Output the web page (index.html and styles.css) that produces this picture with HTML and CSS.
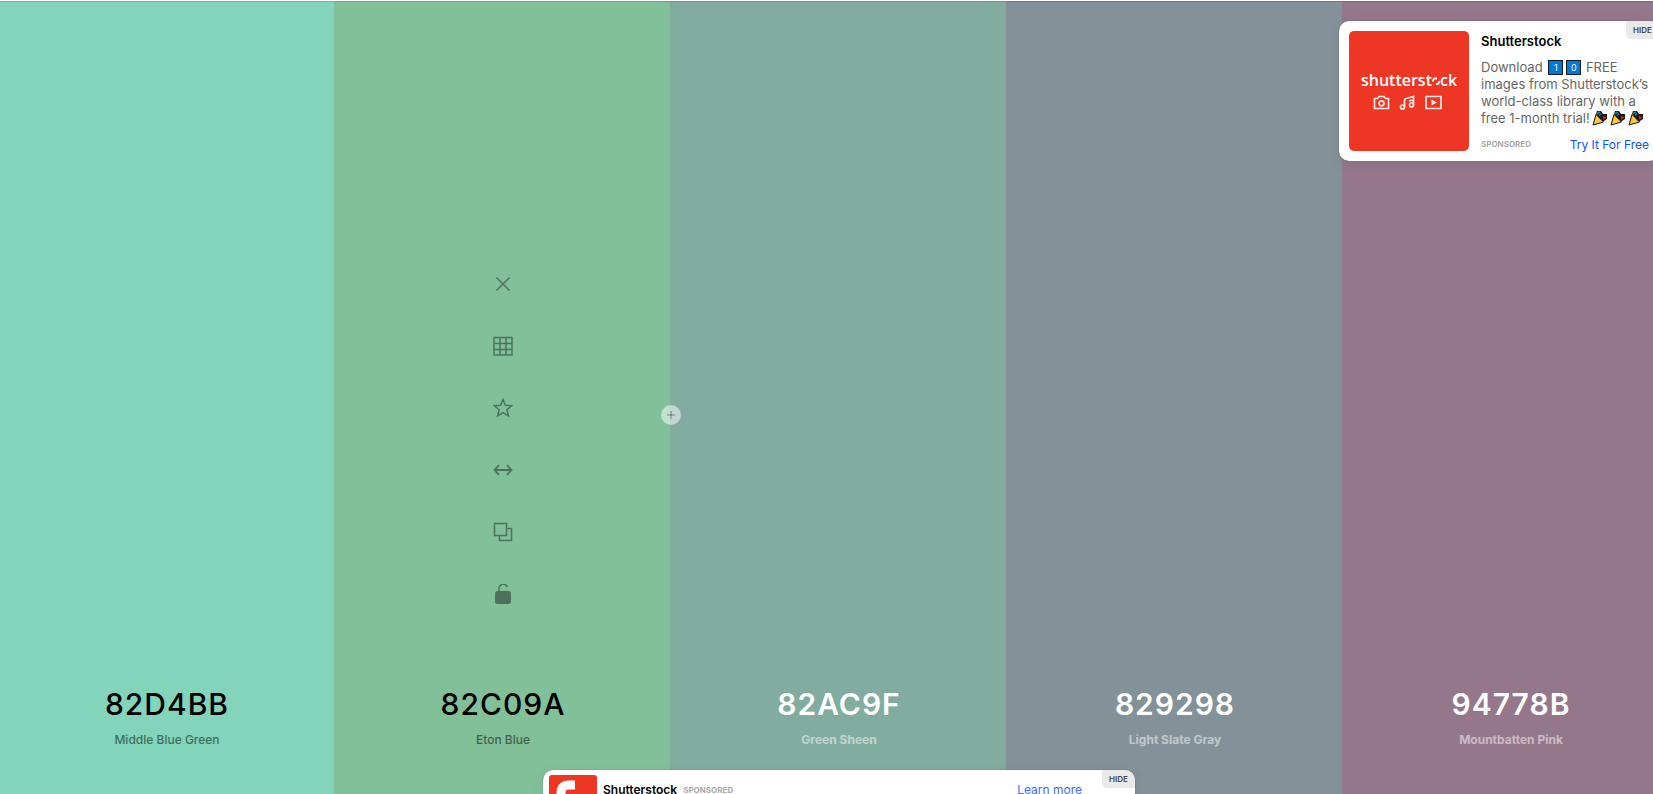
FILE: index.html
```html
<!DOCTYPE html>
<html lang="en">
<head>
<meta charset="utf-8">
<title>Palette generator</title>
<link rel="stylesheet" href="styles.css">
</head>
<body>
<svg class="defs" aria-hidden="true">
  <symbol id="popper" viewBox="0 0 16 16">
    <path d="m4 4 1-3h4l2 3h4v5l-3 2-2 1Z" fill="#161616"/>
    <path d="M1 15 4 4.500 11.500 12Z" fill="#ffc83d" stroke="#111" stroke-width="1" stroke-linejoin="round"/>
    <path d="M5 3.500 8 2M7 5.500l2-2" stroke="#188da5" stroke-width="1.500"/>
    <path d="m10.500 6 4 1-3 3Z" fill="#c92b18"/>
  </symbol>
</svg>
<main class="palette">
  <section class="color color--mint">
    <h2 class="code">82D4BB</h2>
    <p class="name">Middle Blue Green</p>
  </section>
  <section class="color color--eton">
    <div class="tools">
      <button class="tool" aria-label="Remove color"><svg class="icon" viewBox="0 0 20 20"><path d="m3.500 3.500 13 13M16.500 3.500l-13 13"/></svg></button>
      <button class="tool" aria-label="View shades"><svg class="icon" viewBox="0 0 20 20"><path d="M1 1.500h18v17.500h-18ZM7 1.500v17.500M13 1.500v17.500M1 7.500h18M1 13.500h18"/></svg></button>
      <button class="tool" aria-label="Save color"><svg class="icon" viewBox="0 0 20 20"><path d="m10 1.500 2.400 5.700 6.300.5-4.800 4.100 1.500 6.100-5.400-3.300-5.400 3.300 1.500-6.100-4.800-4.100 6.300-.5Z"/></svg></button>
      <button class="tool" aria-label="Drag color"><svg class="icon icon--strong" viewBox="0 0 20 20"><path d="M1.500 10h17M6 5.200 1.500 10 6 14.800M14 5.200l4.500 4.800-4.500 4.800"/></svg></button>
      <button class="tool" aria-label="Copy HEX"><svg class="icon" viewBox="0 0 20 20"><path d="M1.500 1.500h12v12h-12ZM13.500 6.500h5v12h-12v-5"/></svg></button>
      <button class="tool" aria-label="Toggle lock"><svg class="icon" viewBox="0 0 20 20"><path d="M6 7V5a4.300 4.300 0 0 1 8.300-2"/><rect class="solid" x="2" y="7" width="16" height="13" rx="2.500"/></svg></button>
    </div>
    <h2 class="code">82C09A</h2>
    <p class="name">Eton Blue</p>
    <button class="add" aria-label="Add color"><svg class="plus" viewBox="0 0 8 8"><path d="M4 0v8M0 4h8"/></svg></button>
  </section>
  <section class="color color--sheen color--light">
    <h2 class="code">82AC9F</h2>
    <p class="name">Green Sheen</p>
  </section>
  <section class="color color--slate color--light">
    <h2 class="code">829298</h2>
    <p class="name">Light Slate Gray</p>
  </section>
  <section class="color color--pink color--light">
    <h2 class="code">94778B</h2>
    <p class="name">Mountbatten Pink</p>
  </section>

  <aside class="ad ad--card">
    <div class="banner">
      <div class="logo">shutterst<svg class="logo-o" viewBox="0 0 8 10"><path d="M1 5.500V4.500a2 2 0 0 1 2-2h2M7 5v1a2 2 0 0 1-2 2H4"/></svg>ck</div>
      <div class="media">
        <svg class="media-icon" viewBox="0 0 17 15"><path d="M1.500 3.500h3l1.500-2h5l1.500 2h3v10h-14Z"/><circle cx="8.500" cy="8.300" r="2.500"/></svg>
        <svg class="media-icon" viewBox="0 0 17 15"><path d="M5.500 12V5.500q0-1.500 1.500-2l7.500-2V10M10 6l4.500-1"/><circle cx="3.500" cy="12" r="2"/><circle cx="12.500" cy="10" r="2"/></svg>
        <svg class="media-icon" viewBox="0 0 17 15"><path d="M1 1.500h15v12H1Z"/><path class="media-solid" d="m6.500 4.500 5.500 3-5.500 3Z"/></svg>
      </div>
    </div>
    <div class="ad-body">
      <h3 class="ad-title">Shutterstock</h3>
      <p class="ad-text">Download <span class="key">1</span><span class="key">0</span> FREE images from Shutterstock’s world-class library with a free 1-month trial!<svg class="popper"><use href="#popper"/></svg><svg class="popper"><use href="#popper"/></svg><svg class="popper"><use href="#popper"/></svg></p>
      <div class="ad-foot"><span class="sponsored">SPONSORED</span><a class="ad-link" href="#">Try It For Free</a></div>
    </div>
    <button class="hide">HIDE</button>
  </aside>

  <aside class="ad ad--bar">
    <svg class="thumb" viewBox="0 0 48 48"><rect width="48" height="48" rx="3" fill="#ee3624"/><path d="M12 26V18Q12 10 20 10H26" fill="none" stroke="#fff" stroke-width="9"/><path d="M36 24v7q0 8-8 8h-6" fill="none" stroke="#fff" stroke-width="9"/></svg>
    <h3 class="bar-title">Shutterstock</h3>
    <span class="sponsored">SPONSORED</span>
    <a class="bar-link" href="#">Learn more</a>
    <button class="hide">HIDE</button>
  </aside>
</main>
</body>
</html>
```
FILE: styles.css
```css
* { box-sizing: border-box; }
body {
  margin: 0;
  height: 100vh;
  overflow: hidden;
  background: #fff;
  font-family: Inter, "Liberation Sans", sans-serif;
}
h2, h3, p { margin: 0; }
button { border: 0; padding: 0; font-family: inherit; cursor: pointer; }
a { text-decoration: none; }
.defs { display: none; }

.palette {
  position: relative;
  display: flex;
  height: calc(100vh - 1px);
  margin: 1px -25px 0 -2px;
}
.color {
  position: relative;
  flex: 1;
  display: flex;
  flex-direction: column;
  align-items: center;
  justify-content: flex-end;
  padding: 0 0 46px 2px;
  color: #000;
  box-shadow: inset 0 1px rgba(0, 0, 0, .15);
}
.color--mint { background: #82d4bb; }
.color--eton { background: #82c09a; z-index: 1; }
.color--sheen { background: #82ac9f; }
.color--slate { background: #829298; }
.color--pink { background: #94778b; }
.color--light { color: #fff; }

.code {
  font-size: 30px;
  line-height: 40px;
  font-weight: 500;
  letter-spacing: 1px;
}
.name {
  margin-top: 8px;
  font-size: 12px;
  line-height: 16px;
  font-weight: 500;
  opacity: .5;
}
.color--light .code { font-weight: 600; }
.color--light .name { font-weight: 700; }

.tools { display: flex; flex-direction: column; margin-bottom: 59px; }
.tool {
  display: grid;
  place-items: center;
  width: 62px;
  height: 62px;
  background: none;
  opacity: .4;
}
.icon { width: 20px; height: 20px; fill: none; stroke: #000; stroke-width: 1.5; }
.icon--strong { stroke-width: 1.8; }
.icon .solid { fill: #000; stroke: none; }
.add {
  position: absolute;
  right: -11px;
  top: calc(50% + 7px);
  display: grid;
  place-items: center;
  width: 20px;
  height: 20px;
  border-radius: 50%;
  background: rgba(255, 255, 255, .5);
}
.plus { width: 8px; height: 8px; stroke: #000; stroke-opacity: .4; }

.ad {
  position: absolute;
  z-index: 2;
  display: flex;
  background: #fff;
  border-radius: 10px;
  box-shadow: 0 0 1px rgba(0, 0, 0, .5), 0 4px 16px rgba(0, 0, 0, .06);
}
.ad--card { top: 20px; right: 19px; width: 320px; padding: 10px; gap: 12px; }
.banner {
  flex: none;
  display: flex;
  flex-direction: column;
  align-items: center;
  width: 120px;
  height: 120px;
  padding-top: 39px;
  border-radius: 5px;
  background: #ee3624;
  color: #fff;
}
.logo {
  font-family: "Open Sans", sans-serif;
  font-size: 16px;
  line-height: 20px;
  font-weight: 600;
  white-space: nowrap;
}
.logo-o { width: 8px; height: 10px; fill: none; stroke: #fff; stroke-width: 1.8; }
.media { display: flex; gap: 9px; margin: 5px 4px 0 0; }
.media-icon { width: 17px; height: 15px; fill: none; stroke: #fff; stroke-width: 1.7; opacity: .9; }
.media-solid { fill: #fff; stroke: none; }

.ad-body { flex: 1; min-width: 0; }
.ad-title { font-size: 13px; line-height: 20px; font-weight: 600; color: #000; }
.ad-text { width: 172px; margin-top: 8px; font-size: 13px; line-height: 17px; color: #666; }
.key {
  display: inline-block;
  width: 15px;
  height: 15px;
  margin: 0 1px 0 2px;
  border: 1px solid #161c24;
  background: #0078d7;
  color: #fff;
  font-size: 9px;
  line-height: 13px;
  text-align: center;
  vertical-align: 1px;
}
.popper { width: 16px; height: 16px; margin: 0 0 0 2px; vertical-align: -3px; }
.ad-foot { display: flex; justify-content: space-between; align-items: center; width: 168px; margin-top: 11px; }
.sponsored { font-size: 8px; line-height: 13px; font-weight: 700; color: #aaa; }
.ad-link { font-size: 12px; line-height: 13px; color: #0d4fff; }
.hide {
  position: absolute;
  top: 0;
  right: 0;
  width: 33px;
  height: 18px;
  border-radius: 0 10px 0 5px;
  background: #e9e9e9;
  color: #444;
  font-size: 8px;
  font-weight: 600;
}

.ad--bar {
  top: calc(100% - 24px);
  left: 50%;
  width: 592px;
  margin-left: -295px;
  padding: 5px 53px 5px 6px;
  align-items: flex-start;
}
.thumb { width: 48px; height: 48px; }
.bar-title { margin: 5px 6px 0 6px; font-size: 12px; line-height: 20px; font-weight: 600; color: #000; }
.ad--bar .sponsored { margin-top: 9px; }
.bar-link { margin: 5px 0 0 auto; font-size: 12px; line-height: 20px; color: #3c6dff; }
```
